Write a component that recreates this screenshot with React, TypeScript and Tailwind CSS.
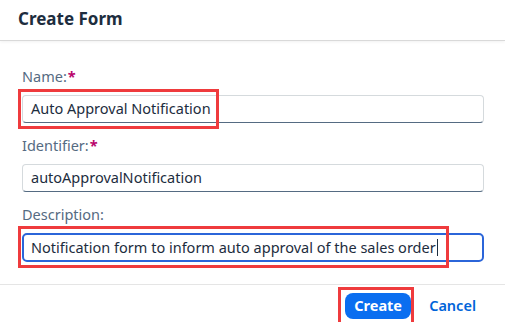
import React from "react";

const font = { fontFamily: '"Noto Sans", "Open Sans", Arial, sans-serif' };

function Label({ text, required }: { text: string; required?: boolean }) {
  return (
    <div className="h-[20px] leading-[20px] text-[14.5px] text-[#556b82] flex items-center">
      <span>{text}</span>
      {required && <span className="text-[#ba066c] font-bold ml-[1px]">*</span>}
    </div>
  );
}

function Field({ value }: { value: string }) {
  return (
    <div className="h-[28px] rounded-[4px] border border-[#d5dadd] border-b-[#556b82] bg-white flex items-center pl-[8px] text-[14.5px] text-[#1d2d3e] whitespace-nowrap overflow-hidden">
      {value}
    </div>
  );
}

export default function App() {
  return (
    <div className="relative w-[505px] h-[322px] bg-white overflow-hidden" style={font}>
      <div className="h-[41px] border-b border-[#d9d9d9] shadow-[0_1px_3px_rgba(0,0,0,0.06)] flex items-center pl-[18px] pb-[3px]">
        <span className="text-[17px] font-bold text-[#1d2d3e]">Create Form</span>
      </div>

      <div className="pt-[25px] pl-[22px] pr-[21px] pb-[22px] flex flex-col">
        <Label text="Name:" required />
        <div className="h-[9px]" />
        <Field value="Auto Approval Notification" />
        <div className="h-[12px]" />
        <Label text="Identifier:" required />
        <div className="h-[9px]" />
        <Field value="autoApprovalNotification" />
        <div className="h-[12px]" />
        <Label text="Description:" />
        <div className="h-[9px]" />
        <div className="h-[29px] rounded-[5px] border-2 border-[#2b65d9] bg-white flex items-center pl-[7px] text-[14.5px] text-[#1d2d3e] whitespace-nowrap overflow-hidden">
          <span>Notification form to inform auto approval of the sales order</span>
          <span className="inline-block w-[1px] h-[17px] bg-[#1d2d3e] ml-[1px]" />
        </div>
      </div>

      <div className="border-t border-[#e5e5e5] flex justify-end items-start gap-[18px] pt-[8px] pr-[29px]">
        <div className="h-[26px] w-[66px] rounded-[8px] bg-[#0a6ef0] text-white text-[14.5px] font-bold flex items-center justify-center">
          Create
        </div>
        <div className="h-[26px] text-[#0064d9] text-[14.5px] font-semibold flex items-center">
          Cancel
        </div>
      </div>

      <div className="absolute left-[18px] top-[89px] w-[201px] h-[40px] border-[3px] border-[#ef3b3d] pointer-events-none" />
      <div className="absolute left-[18px] top-[226px] w-[431px] h-[42px] border-[3px] border-[#ef3b3d] pointer-events-none" />
      <div className="absolute left-[338px] top-[287px] w-[76px] h-[38px] border-[3px] border-[#ef3b3d] pointer-events-none" />
    </div>
  );
}
